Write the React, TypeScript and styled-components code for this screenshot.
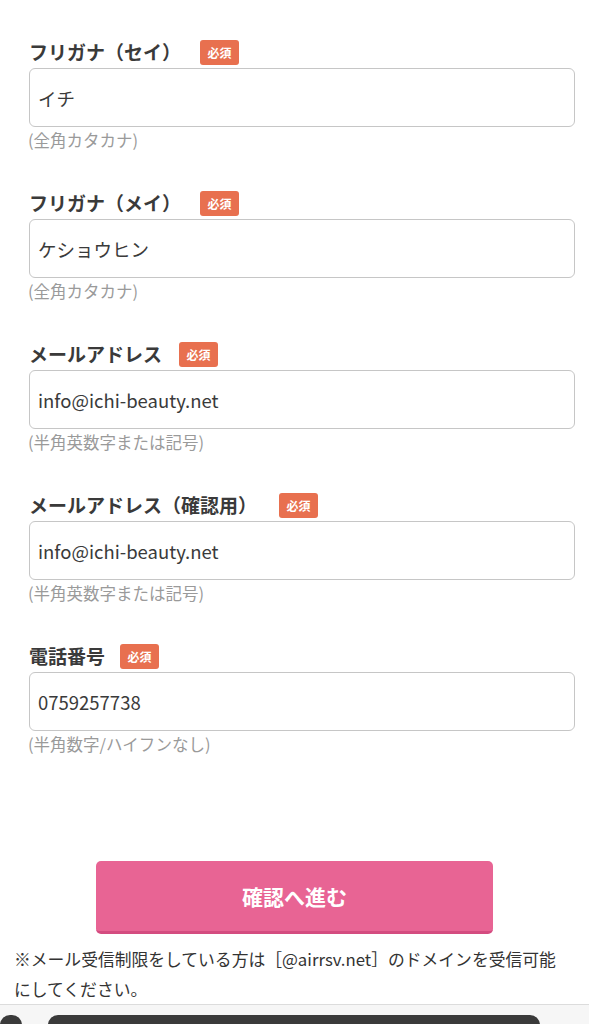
import React from 'react';
import styled, { createGlobalStyle } from 'styled-components';

const GlobalStyle = createGlobalStyle`
    html, body {
        margin: 0;
        padding: 0;
        height: 1024px;
        overflow: hidden;
        background: #ffffff;
        font-family: "Noto Sans CJK JP", "Noto Sans", sans-serif;
        color: #333333;
    }
`;

const Page = styled.div`
    display: flex;
    flex-direction: column;
    height: 1024px;
`;

const Form = styled.form`
    display: flex;
    flex-direction: column;
    gap: 39px;
    padding: 39px 14px 0 29px;
`;

const Field = styled.div`
    display: flex;
    flex-direction: column;
`;

const LabelRow = styled.div`
    display: flex;
    align-items: center;
    height: 26px;
    margin-bottom: 3px;
`;

const Label = styled.label`
    font-size: 19px;
    font-weight: 700;
    color: #3a3a3a;
    line-height: 26px;
`;

const Badge = styled.span<{ $gap?: number }>`
    display: inline-flex;
    align-items: center;
    justify-content: center;
    width: 39px;
    height: 25px;
    margin-left: ${(p) => p.$gap ?? 17}px;
    border-radius: 3px;
    background: #e8704f;
    color: #ffffff;
    font-size: 12px;
    font-weight: 700;
`;

const Input = styled.input`
    box-sizing: border-box;
    width: 100%;
    height: 59px;
    padding: 0 8px;
    border: 1px solid #c6c6c6;
    border-radius: 6px;
    background: #ffffff;
    font-family: "Noto Sans CJK JP", "Noto Sans", sans-serif;
    font-size: 18.5px;
    color: #3a3a3a;
    outline: none;
`;

const Hint = styled.p`
    margin: 3px 0 0 -1px;
    font-size: 16.5px;
    line-height: 21px;
    color: #9a9a9a;
`;

const Actions = styled.div`
    display: flex;
    justify-content: center;
    margin-top: 106px;
`;

const SubmitButton = styled.button`
    box-sizing: border-box;
    width: 397px;
    height: 73px;
    border: none;
    border-bottom: 3px solid #d44c80;
    border-radius: 5px;
    background: #e86494;
    color: #ffffff;
    font-family: "Noto Sans CJK JP", "Noto Sans", sans-serif;
    font-size: 21px;
    font-weight: 700;
    cursor: pointer;
`;

const Note = styled.p`
    margin: 10px 0 0;
    padding: 0 28px 0 14px;
    font-size: 16.8px;
    line-height: 30px;
    color: #333333;
`;

const BottomBar = styled.div`
    display: flex;
    align-items: flex-start;
    gap: 26px;
    margin-top: auto;
    height: 14px;
    padding-top: 10px;
    border-top: 1px solid #dcdcdc;
    background: #f6f6f6;
    overflow: hidden;
`;

const Pill = styled.div<{ $w: number }>`
    flex: 0 0 ${(p) => p.$w}px;
    height: 20px;
    border-radius: 10px;
    background: #3a3a3a;
`;

const fields = [
    { label: 'フリガナ（セイ）', value: 'イチ', hint: '(全角カタカナ)', gap: 19 },
    { label: 'フリガナ（メイ）', value: 'ケショウヒン', hint: '(全角カタカナ)', gap: 19 },
    { label: 'メールアドレス', value: 'info@ichi-beauty.net', hint: '(半角英数字または記号)', gap: 17 },
    { label: 'メールアドレス（確認用）', value: 'info@ichi-beauty.net', hint: '(半角英数字または記号)', gap: 22 },
    { label: '電話番号', value: '0759257738', hint: '(半角数字/ハイフンなし)', gap: 15 },
];

export default function App() {
    return (
        <>
            <GlobalStyle />
            <Page>
                <Form onSubmit={(e) => e.preventDefault()}>
                    {fields.map((f) => (
                        <Field key={f.label}>
                            <LabelRow>
                                <Label>{f.label}</Label>
                                <Badge $gap={f.gap}>必須</Badge>
                            </LabelRow>
                            <Input defaultValue={f.value} />
                            <Hint>{f.hint}</Hint>
                        </Field>
                    ))}
                </Form>
                <Actions>
                    <SubmitButton type="button">確認へ進む</SubmitButton>
                </Actions>
                <Note>※メール受信制限をしている方は［@airrsv.net］のドメインを受信可能にしてください。</Note>
                <BottomBar>
                    <Pill $w={22} />
                    <Pill $w={492} />
                </BottomBar>
            </Page>
        </>
    );
}
